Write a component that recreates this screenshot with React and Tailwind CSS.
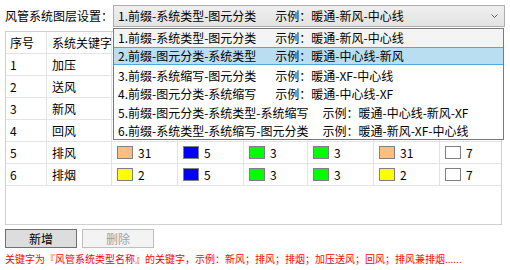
import React from "react";

const rowsTop = [
  ["1", "加压"],
  ["2", "送风"],
  ["3", "新风"],
  ["4", "回风"],
];

const colorMap = {
  31: "#FFBF7F",
  5: "#0000FF",
  3: "#00FF00",
  2: "#FFFF00",
  7: "#FFFFFF",
};

const rowsBottom = [
  ["5", "排风", [31, 5, 3, 3, 31, 7]],
  ["6", "排烟", [2, 5, 3, 3, 2, 7]],
];

const items = [
  ["1.前缀-系统类型-图元分类", "示例：暖通-新风-中心线", 19],
  ["2.前缀-图元分类-系统类型", "示例：暖通-中心线-新风", 19],
  ["3.前缀-系统缩写-图元分类", "示例：暖通-XF-中心线", 19],
  ["4.前缀-图元分类-系统缩写", "示例：暖通-中心线-XF", 19],
  ["5.前缀-图元分类-系统类型-系统缩写", "示例：暖通-中心线-新风-XF", 14],
  ["6.前缀-系统类型-系统缩写-图元分类", "示例：暖通-新风-XF-中心线", 14],
];

function Swatch({ c }) {
  return (
    <div className="flex items-center pl-[5px]">
      <div
        className="w-[16px] h-[13px] border border-[#808080]"
        style={{ backgroundColor: colorMap[c] }}
      />
      <span className="ml-[5px]">{c}</span>
    </div>
  );
}

const cellB = "border-r border-b border-[#E3E3E3] h-[22px] flex items-center";

export default function App() {
  return (
    <div
      className="relative w-[510px] h-[270px] bg-white overflow-hidden text-[12px] text-black"
      style={{ fontFamily: '"Noto Sans CJK SC", "Noto Sans", sans-serif' }}
    >
      <div className="flex items-center pt-[5px] pl-[5px]">
        <div className="w-[108px] leading-[22px]">风管系统图层设置：</div>
        <div className="w-[392px] h-[22px] border border-[#ADADAD] bg-gradient-to-b from-[#EFEFEF] to-[#E3E3E3] flex items-center pl-[4px] pr-[6px]">
          <span>1.前缀-系统类型-图元分类</span>
          <span className="ml-[19px]">示例：暖通-新风-中心线</span>
          <svg className="ml-auto" width="7" height="5" viewBox="0 0 7 5">
            <polyline points="0.5,0.5 3.5,3.5 6.5,0.5" fill="none" stroke="#606060" strokeWidth="1" />
          </svg>
        </div>
      </div>

      <div className="ml-[5px] mt-[4px] w-[497px] h-[194px] border border-[#D0D0D0] overflow-hidden">
        <div className="grid grid-cols-[41px_65px_66px_66px_64px_66px_66px_61px]">
          <div className={cellB + " pl-[4px]"}>序号</div>
          <div className={cellB + " pl-[5px] overflow-hidden whitespace-nowrap"}>系统关键字</div>
          <div className={cellB}></div>
          <div className={cellB}></div>
          <div className={cellB}></div>
          <div className={cellB}></div>
          <div className={cellB}></div>
          <div className={cellB + " border-r-0"}></div>
          {rowsTop.map(([n, k]) => (
            <React.Fragment key={n}>
              <div className={cellB + " pl-[4px]"}>{n}</div>
              <div className={cellB + " pl-[5px]"}>{k}</div>
              <div className={cellB}></div>
              <div className={cellB}></div>
              <div className={cellB}></div>
              <div className={cellB}></div>
              <div className={cellB}></div>
              <div className={cellB + " border-r-0"}></div>
            </React.Fragment>
          ))}
          {rowsBottom.map(([n, k, cs]) => (
            <React.Fragment key={n}>
              <div className={cellB + " pl-[4px]"}>{n}</div>
              <div className={cellB + " pl-[5px]"}>{k}</div>
              {cs.map((c, i) => (
                <div key={i} className={cellB + (i === 5 ? " border-r-0" : "")}>
                  <Swatch c={c} />
                </div>
              ))}
            </React.Fragment>
          ))}
        </div>
      </div>

      <div className="flex gap-[5px] ml-[5px] mt-[4px]">
        <button className="w-[72px] h-[19px] border border-[#707070] bg-[#DDDDDD] flex items-center justify-center leading-none">
          新增
        </button>
        <button className="w-[72px] h-[19px] border border-[#BFBFBF] bg-[#F3F3F3] text-[#A0A0A0] flex items-center justify-center leading-none">
          删除
        </button>
      </div>

      <div className="ml-[5px] mt-[4px] text-[10px] leading-[14px] text-[#FF0000] whitespace-nowrap">
        关键字为『风管系统类型名称』的关键字，示例：新风；排风；排烟；加压送风；回风；排风兼排烟......
      </div>

      <div className="absolute left-[113px] top-[28px] w-[391px] h-[112px] border border-[#7A7A7A] bg-white flex flex-col">
        {items.map(([a, b, gap], i) => (
          <div
            key={i}
            className={
              "flex items-center pl-[4px] whitespace-nowrap " +
              (i === 1
                ? "h-[18px] bg-[#B9DEF2] border-y border-[#4FA9DE]"
                : i === 0
                ? "h-[18px] bg-[#F4F4F4]"
                : "h-[18.5px] pt-[3px]")
            }
          >
            <span>{a}</span>
            <span style={{ marginLeft: gap }}>{b}</span>
          </div>
        ))}
      </div>
    </div>
  );
}
